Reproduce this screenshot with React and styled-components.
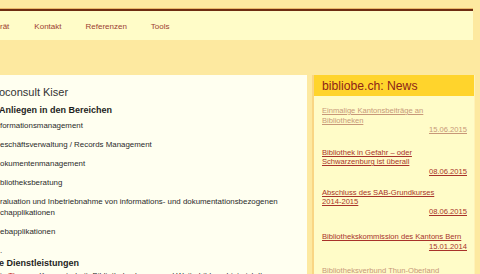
import React from 'react';
import styled, { createGlobalStyle } from 'styled-components';

const Global = createGlobalStyle`
    html, body {
        margin: 0;
        padding: 0;
        background: #fde9a0;
        overflow: hidden;
    }
    body {
        font-family: "Liberation Sans", Arial, sans-serif;
    }
`;

const Page = styled.div`
    width: 480px;
    height: 274px;
    overflow: hidden;
    padding-top: 9px;
    box-sizing: border-box;
`;

const NavBar = styled.ul`
    list-style: none;
    margin: 0;
    padding: 1px 0 0 0;
    width: 473px;
    height: 31px;
    box-sizing: border-box;
    display: flex;
    align-items: center;
    gap: 24px;
    background: #fffcc8;
    border-top: 2px solid #6e2c12;
    box-shadow: 0 -1px 0 #e9b86a;
    li {
        font-size: 8px;
        color: #9c4030;
    }
    li:nth-child(2) {
        margin-left: 1px;
    }
`;

const Columns = styled.div`
    display: flex;
    align-items: flex-start;
    margin-top: 35px;
    gap: 5px;
`;

const Main = styled.div`
    width: 307px;
    height: 200px;
    background: #fffff0;
    padding-top: 10px;
    box-sizing: border-box;
    color: #2a2a2a;
`;

const Title = styled.h2`
    margin: 0 0 5px -1px;
    font-size: 11px;
    line-height: 14px;
    font-weight: normal;
    color: #333;
`;

const Heading = styled.h3`
    margin: 0 0 ${p => p.$after}px -1px;
    font-size: 9px;
    line-height: 12px;
    font-weight: bold;
    color: #1e1e1e;
`;

const List = styled.ul`
    list-style: none;
    margin: 0;
    padding: 0;
    li {
        font-size: 7.9px;
        line-height: 11px;
        margin-bottom: 8px;
        width: 290px;
    }
    li:last-child {
        margin-bottom: 1px;
    }
`;

const Para = styled.p`
    margin: 0;
    font-size: 7.9px;
    line-height: 11px;
    a {
        color: #c0281e;
        text-decoration: none;
    }
`;

const Sidebar = styled.div`
    width: 160px;
    height: 200px;
    border-left: 2px solid #f9d684;
    border-right: 1px solid #fff2b8;
    background: #fffcc8;
`;

const SideHead = styled.h2`
    margin: 0;
    height: 21px;
    padding-left: 8px;
    display: flex;
    align-items: center;
    background: #ffd42c;
    font-size: 12.2px;
    font-weight: normal;
    color: #8e2418;
`;

const NewsList = styled.div`
    padding: 10px 7px 0 8px;
    display: flex;
    flex-direction: column;
`;

const NewsItem = styled.div`
    margin-bottom: ${p => p.$after}px;
    font-size: 7.6px;
    line-height: 9.5px;
    a {
        color: ${p => (p.$visited ? '#c79878' : '#a8322a')};
        text-decoration: underline;
    }
`;

const NewsTitle = styled.div`
    max-width: 143px;
`;

const NewsDate = styled.div`
    text-align: right;
`;

const news = [
    { title: 'Einmalige Kantonsbeiträge an Bibliotheken', date: '15.06.2015', visited: true, after: 13 },
    { title: 'Bibliothek in Gefahr – oder Schwarzenburg ist überall', date: '08.06.2015', after: 11.5 },
    { title: 'Abschluss des SAB-Grundkurses 2014-\u20602015', date: '08.06.2015', after: 16 },
    { title: 'Bibliothekskommission des Kantons Bern', date: '15.01.2014', after: 15 },
    { title: 'Bibliotheksverbund Thun-Oberland', date: '', visited: true, after: 0 },
];

const areas = [
    'formationsmanagement',
    'eschäftsverwaltung / Records Management',
    'okumentenmanagement',
    'bliotheksberatung',
    'raluation und Inbetriebnahme von informations- und dokumentationsbezogenen chapplikationen',
    'ebapplikationen',
    '.',
];

export default function App() {
    return (
        <Page>
            <Global />
            <NavBar>
                <li>rät</li>
                <li>Kontakt</li>
                <li>Referenzen</li>
                <li>Tools</li>
            </NavBar>
            <Columns>
                <Main>
                    <Title>oconsult Kiser</Title>
                    <Heading $after={4}>Anliegen in den Bereichen</Heading>
                    <List>
                        {areas.map(a => (
                            <li key={a}>{a}</li>
                        ))}
                    </List>
                    <Heading $after={1}>e Dienstleistungen</Heading>
                    <Para>
                        ie <a href="#">Themen</a> Konzeptarbeit, Bibliotheksplanung und Weiterbildung biete ich Ihnen gerne
                    </Para>
                </Main>
                <Sidebar>
                    <SideHead>bibliobe.ch: News</SideHead>
                    <NewsList>
                        {news.map(n => (
                            <NewsItem key={n.title} $visited={n.visited} $after={n.after}>
                                <NewsTitle>
                                    <a href="#">{n.title}</a>
                                </NewsTitle>
                                {n.date && (
                                    <NewsDate>
                                        <a href="#">{n.date}</a>
                                    </NewsDate>
                                )}
                            </NewsItem>
                        ))}
                    </NewsList>
                </Sidebar>
            </Columns>
        </Page>
    );
}
